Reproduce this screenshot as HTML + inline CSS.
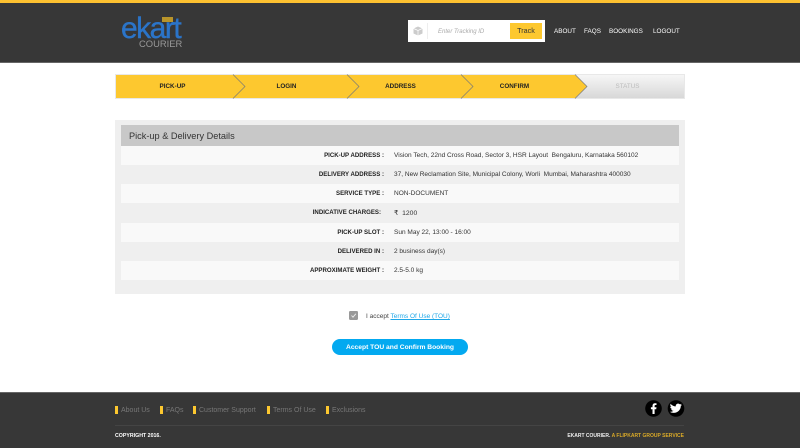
<!DOCTYPE html>
<html><head><meta charset="utf-8">
<style>
*{box-sizing:border-box}
html,body{margin:0;padding:0;width:800px;height:448px;overflow:hidden;background:#fff;font-family:"Liberation Sans",sans-serif;position:relative}
.a{position:absolute;white-space:nowrap}
.row{position:absolute;left:121px;width:558px}
.l{position:absolute;right:295px;width:250px;text-align:right;font-size:6.1px;font-weight:bold;color:#222;white-space:nowrap}
.v{position:absolute;left:273px;font-size:6.53px;color:#333;white-space:nowrap}
.st{position:absolute;top:74px;height:24px;line-height:26px;font-size:6.3px;font-weight:bold;color:#222;text-align:center}
.f{position:absolute;top:406px;font-size:7px;color:#777;white-space:nowrap;line-height:10px}
.f i{position:absolute;left:-6px;top:0;width:3px;height:8px;background:#fdc82f}
.n{position:absolute;top:27px;font-size:6.35px;color:#fff;white-space:nowrap;line-height:10px}
</style></head><body>
<div class="a" style="left:0;top:0;width:800px;height:63px;background:#373737;border-top:3px solid #fdc130;border-bottom:1.5px solid #666"></div>

<div class="a" style="left:121px;top:14px;font-size:30px;line-height:30px;color:#2b74c8;letter-spacing:-1.5px;-webkit-text-stroke:.4px #2b74c8">ekart</div>
<div class="a" style="left:162px;top:17px;width:11px;height:5px;background:#b8942a"></div>
<div class="a" style="left:139px;top:38px;font-size:9.4px;line-height:11px;color:#999">COURIER</div>

<div class="a" style="left:408px;top:20px;width:137px;height:22px;background:#fff"></div>
<svg class="a" style="left:412px;top:25px" width="12" height="12" viewBox="0 0 12 12"><path d="M6 1.5L10.5 3.5V8.5L6 10.5L1.5 8.5V3.5Z" fill="#ccc"/><path d="M1.5 3.5L6 5.5L10.5 3.5M6 5.5V10.5" stroke="#fff" stroke-width=".7" fill="none"/></svg>
<div class="a" style="left:427px;top:23px;width:1px;height:16px;background:#eee"></div>
<div class="a" style="left:438px;top:26px;font-size:6px;line-height:12px;font-style:italic;color:#aaa">Enter Tracking ID</div>
<div class="a" style="left:510px;top:23px;width:32px;height:16px;background:#fdc82f;font-size:7.2px;line-height:16px;text-align:center;color:#333">Track</div>
<div class="n" style="left:554px">ABOUT</div>
<div class="n" style="left:584px">FAQS</div>
<div class="n" style="left:609px">BOOKINGS</div>
<div class="n" style="left:653px">LOGOUT</div>

<div class="a" style="left:115px;top:74px;width:570px;height:25px;background:linear-gradient(#f6f6f6,#d8d8d8);border:1px solid #e8e8e8"></div>
<svg class="a" style="left:115px;top:74px" width="570" height="25" viewBox="0 0 570 25">
<path d="M1 1H460L472 12.5L460 24H1Z" fill="#fdc82f"/>
<path d="M118 .5L130 12.5L118 24.5M232 .5L244 12.5L232 24.5M346 .5L358 12.5L346 24.5M460 .5L472 12.5L460 24.5" fill="none" stroke="#777" stroke-width=".7"/>
</svg>
<div class="st" style="left:115px;width:115px">PICK-UP</div>
<div class="st" style="left:229px;width:115px">LOGIN</div>
<div class="st" style="left:343px;width:115px">ADDRESS</div>
<div class="st" style="left:457px;width:115px">CONFIRM</div>
<div class="st" style="left:570px;width:115px;color:#bbb;font-weight:normal">STATUS</div>

<div class="a" style="left:115px;top:120px;width:570px;height:174px;background:#efefef"></div>
<div class="a" style="left:121px;top:125px;width:558px;height:21px;background:#c8c8c8;color:#333;font-size:9.2px;line-height:23px;padding-left:8px">Pick-up &amp; Delivery Details</div>

<div class="row" style="top:146px;height:19px;background:#f9f9f9"><div class="l" style="top:6px">PICK-UP ADDRESS :</div><div class="v" style="top:6px">Vision Tech, 22nd Cross Road, Sector 3, HSR Layout&nbsp; Bengaluru, Karnataka 560102</div></div>
<div class="row" style="top:165px;height:19px"><div class="l" style="top:6px">DELIVERY ADDRESS :</div><div class="v" style="top:6px">37, New Reclamation Site, Municipal Colony, Worli&nbsp; Mumbai, Maharashtra 400030</div></div>
<div class="row" style="top:184px;height:19px;background:#f9f9f9"><div class="l" style="top:6px">SERVICE TYPE :</div><div class="v" style="top:6px">NON-DOCUMENT</div></div>
<div class="row" style="top:203px;height:20px"><div class="l" style="top:6px;right:298px">INDICATIVE CHARGES:</div><div class="v" style="top:6px;font-size:6.8px"><span style="font-family:'DejaVu Sans',sans-serif">₹</span>&nbsp; 1200</div></div>
<div class="row" style="top:223px;height:19px;background:#f9f9f9"><div class="l" style="top:6px">PICK-UP SLOT :</div><div class="v" style="top:6px">Sun May 22, 13:00 - 16:00</div></div>
<div class="row" style="top:242px;height:19px"><div class="l" style="top:6px">DELIVERED IN :</div><div class="v" style="top:6px">2 business day(s)</div></div>
<div class="row" style="top:261px;height:19px;background:#f9f9f9"><div class="l" style="top:6px">APPROXIMATE WEIGHT :</div><div class="v" style="top:6px">2.5-5.0 kg</div></div>

<svg class="a" style="left:349px;top:311px" width="9" height="9" viewBox="0 0 9 9"><rect width="9" height="9" rx="1.2" fill="#999"/><path d="M2.5 4.5L4 6.2L6.8 2.8" stroke="#eee" stroke-width=".9" fill="none"/></svg>
<div class="a" style="left:366px;top:312px;font-size:6.5px;line-height:10px;color:#444">I accept <span style="color:#1ea7e8;text-decoration:underline">Terms Of Use (TOU)</span></div>
<div class="a" style="left:332px;top:339px;width:136px;height:16px;border-radius:8px;background:#03a9f0;color:#fff;font-size:6.7px;font-weight:bold;line-height:17px;text-align:center">Accept TOU and Confirm Booking</div>

<div class="a" style="left:0;top:392px;width:800px;height:56px;background:#373737;border-top:1.5px solid #666"></div>
<div class="f" style="left:121px"><i></i>About Us</div>
<div class="f" style="left:166px"><i></i>FAQs</div>
<div class="f" style="left:199px"><i></i>Customer Support</div>
<div class="f" style="left:273px"><i></i>Terms Of Use</div>
<div class="f" style="left:332px"><i></i>Exclusions</div>
<svg class="a" style="left:645px;top:400px" width="40" height="17" viewBox="0 0 40 17">
<circle cx="8.5" cy="8.5" r="8.3" fill="#000"/>
<path d="M9.6 14V9.2H11.2L11.5 7.2H9.6V6C9.6 5.4 9.8 5 10.6 5H11.5V3.3C11.2 3.3 10.7 3.2 10 3.2C8.5 3.2 7.5 4.1 7.5 5.8V7.2H5.9V9.2H7.5V14Z" fill="#fff"/>
<circle cx="31" cy="8.5" r="8.3" fill="#000"/>
<path d="M37 4.8C36.5 5 36 5.2 35.5 5.2C36 4.9 36.4 4.4 36.6 3.8C36.1 4.1 35.6 4.3 35 4.4C34.5 3.9 33.8 3.6 33.1 3.6C31.6 3.6 30.5 4.9 30.8 6.4C28.7 6.3 26.8 5.3 25.6 3.7C25 4.8 25.3 6.2 26.4 6.9C26 6.9 25.6 6.8 25.2 6.6C25.2 7.8 26 8.8 27.2 9C26.8 9.1 26.5 9.1 26.1 9.1C26.4 10.1 27.4 10.8 28.5 10.8C27.4 11.6 26.1 12 24.8 11.8C25.9 12.5 27.2 12.9 28.6 12.9C33.3 12.9 35.9 9 35.8 6C36.3 5.7 36.7 5.3 37 4.8Z" fill="#fff"/>
</svg>
<div class="a" style="left:115px;top:425px;width:569px;height:1px;background:#444"></div>
<div class="a" style="left:115px;top:431px;font-size:5.25px;line-height:10px;color:#fff;font-weight:bold">COPYRIGHT 2016.</div>
<div class="a" style="right:116px;top:431px;font-size:5px;line-height:10px;color:#eee;font-weight:bold">EKART COURIER. <span style="color:#d9a928">A FLIPKART GROUP SERVICE</span></div>
</body></html>
